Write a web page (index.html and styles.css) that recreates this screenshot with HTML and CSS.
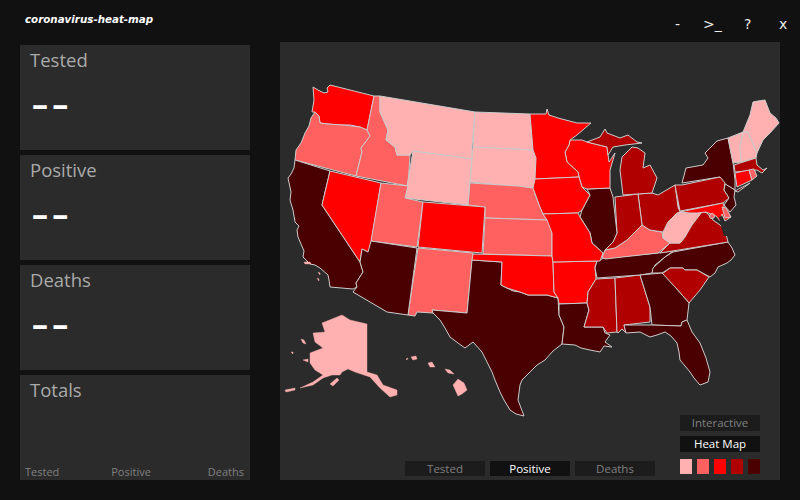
FILE: index.html
```html
<!DOCTYPE html>
<html>
<head lang="en">
    <meta charset="UTF-8">
    <title>coronavirus-heat-map</title>
    <link rel="stylesheet" href="styles.css">
</head>
<body>
<div class="app">
    <div class="titlebar">
        <div class="title">coronavirus-heat-map</div>
        <div class="win-btns">
            <span class="win-min">-</span>
            <span class="win-term">&gt;_</span>
            <span class="win-help">?</span>
            <span class="win-close">x</span>
        </div>
    </div>
    <div class="main">
        <div class="side">
            <div class="card">
                <div class="card-title">Tested</div>
                <div class="card-value">– –</div>
            </div>
            <div class="card">
                <div class="card-title">Positive</div>
                <div class="card-value">– –</div>
            </div>
            <div class="card">
                <div class="card-title">Deaths</div>
                <div class="card-value">– –</div>
            </div>
            <div class="card card-totals">
                <div class="card-title">Totals</div>
                <div class="totals-row">
                    <span>Tested</span>
                    <span class="totals-mid">Positive</span>
                    <span>Deaths</span>
                </div>
            </div>
        </div>
        <div class="map-panel">
            <svg class="map" viewBox="280 42 500 438">
                <polygon class="l3" points="313,87 318,90 324,93 328,92 327,88 330,85 374,96 367,130 360,127 350,125 340,125 328,124 320,123 319,116 315,112 312,112 314,100"/>
                <polygon class="l2" points="315,112 319,116 320,123 328,124 343,125 360,127 367,130 370,136 361,148 362,152 356,176 295,160 296,150 301,143 305,133 309,126 311,118"/>
                <polygon class="l5" points="295,160 330,171 322,205 360,262 363,272 356,283 357,287 353,289 330,287 329,280 328,275 320,268 315,265 310,264 303,257 304,251 298,237 297,230 299,226 295,222 293,210 290,200 291,192 288,178 291,174 294,168"/>
                <polygon class="l3" points="330,171 381,183 370,250 368,252 362,249 360,262 322,205"/>
                <polygon class="l2" points="374,96 380,96 380,112 388,130 386,140 395,147 397,155 410,155 408,186 356,176 362,152 361,148 370,136 367,130"/>
                <polygon class="l1" points="380,96 475,112 472,147 472,159 413,151 410,155 397,155 395,147 386,140 388,130 380,112"/>
                <polygon class="l1" points="413,151 472,159 468,205 405,198"/>
                <polygon class="l1" points="475,112 530,114 533,150 473,147"/>
                <polygon class="l1" points="473,147 533,150 536,158 536,180 533,188 520,187 470,182 472,159"/>
                <polygon class="l2" points="470,183 518,186 533,188 536,197 540,207 543,214 547,220 485,218 485,207 468,205"/>
                <polygon class="l2" points="381,183 408,186 405,198 423,202 417,247 371,241"/>
                <polygon class="l3" points="423,202 485,207 482,253 418,247"/>
                <polygon class="l2" points="485,218 547,220 552,226 552,233 552,256 483,254"/>
                <polygon class="l2" points="418,248 473,253 467,313 432,310 433,313 417,312 415,316 408,315"/>
                <polygon class="l5" points="371,241 417,248 408,315 387,312 353,292 357,287 356,283 363,272 360,262 362,249 368,252"/>
                <polygon class="l5" points="472,260 502,262 501,285 507,288 513,291 520,292 528,295 537,295 547,295 558,298 559,315 564,327 562,344 553,351 545,360 537,365 530,372 522,380 520,385 518,400 524,416 516,414 510,410 504,400 500,392 495,380 492,372 487,362 482,352 473,342 465,348 458,343 450,337 445,328 440,320 433,313 432,310 467,313"/>
                <polygon class="l3" points="473,254 552,256 553,262 554,292 558,298 547,295 537,295 528,295 520,292 507,288 501,285 502,262 472,260"/>
                <polygon class="l3" points="553,262 597,261 595,267 596,279 588,292 587,303 559,304 558,298 554,292"/>
                <polygon class="l5" points="559,304 587,303 589,310 584,327 603,327 605,333 610,335 605,342 612,347 604,346 600,352 590,350 581,348 575,345 562,344 564,327 559,315"/>
                <polygon class="l4" points="596,279 615,278 617,332 607,333 603,327 584,327 589,310 587,303 588,292"/>
                <polygon class="l4" points="615,278 640,275 650,307 650,322 624,325 626,333 622,329 618,333 617,332"/>
                <polygon class="l5" points="604,258 658,253 673,251 665,257 655,265 652,273 640,275 597,278 595,268 597,261"/>
                <polygon class="l5" points="673,252 728,242 732,248 735,255 731,260 727,263 718,267 715,273 710,277 697,270 685,270 683,268 670,268 662,273 652,273 653,268 665,257"/>
                <polygon class="l4" points="662,274 670,268 683,268 685,270 697,270 709,277 700,290 689,303 675,287"/>
                <polygon class="l5" points="640,275 662,273 675,287 689,303 687,320 682,322 681,326 652,325 650,307"/>
                <polygon class="l5" points="624,325 652,325 681,326 682,322 687,320 692,332 700,343 706,358 710,372 708,382 700,385 694,378 690,372 680,360 679,352 677,343 671,336 665,332 657,335 650,337 640,332 626,333"/>
                <polygon class="l2" points="602,257 605,250 615,248 627,240 642,225 650,230 662,232 663,238 670,243 658,253 605,259"/>
                <polygon class="l4" points="670,243 680,243 685,237 690,225 700,210 707,213 713,220 720,225 725,230 728,242 660,253"/>
                <polygon class="l1" points="663,232 668,222 677,213 677,200 680,212 690,213 697,213 700,210 702,212 692,225 685,237 680,243 670,243 663,238"/>
                <polygon class="l4" points="638,194 652,193 658,195 675,185 678,207 680,212 677,213 668,222 663,232 650,230 642,225"/>
                <polygon class="l4" points="615,197 638,194 642,225 627,240 615,248 605,250 613,242 617,233"/>
                <polygon class="l5" points="587,189 610,188 613,197 617,233 613,242 605,250 602,257 603,253 592,243 590,233 580,217 582,210 590,195"/>
                <polygon class="l3" points="570,140 582,140 587,142 607,147 609,162 615,153 610,170 610,188 587,189 582,187 579,177 578,172 567,162 565,152 569,145"/>
                <polygon class="l3" points="530,114 546,114 547,109 549,115 558,118 577,123 591,123 577,135 570,140 569,145 565,152 567,162 578,172 579,177 535,179 536,158 533,150"/>
                <polygon class="l3" points="535,179 579,177 582,187 590,195 582,210 578,213 543,214 540,207 533,188"/>
                <polygon class="l3" points="543,214 578,213 580,217 590,233 592,243 603,253 600,261 597,261 553,262 552,256 552,233 547,220"/>
                <polygon class="l4" points="587,142 600,137 605,129 607,133 620,138 628,135 637,142 642,143 625,145 613,147 608,155 607,147"/>
                <polygon class="l4" points="632,147 638,148 645,153 643,168 650,165 657,178 652,193 623,195 620,170 622,157"/>
                <polygon class="l5" points="682,183 686,168 703,165 708,158 705,153 717,141 728,138 733,162 735,180 735,190 725,184 720,177"/>
                <polygon class="l5" points="735,191 750,183 738,192"/>
                <polygon class="l4" points="675,185 682,185 720,177 725,183 724,190 729,198 723,203 680,211"/>
                <polygon class="l5" points="725,184 735,190 734,197 736,205 730,212 724,205 729,198 724,190"/>
                <polygon class="l3" points="680,212 723,203 726,214 731,217 725,221 722,214 721,222 716,216 706,212 697,213 690,213"/>
                <polygon class="l2" points="722,207 726,208 731,217 725,218"/>
                <polygon class="bay" points="719,217 722,216 724,226 728,236 724,236 721,226"/>
                <circle class="l2" cx="712" cy="216" r="2.5"/>
                <polygon class="l1" points="728,138 743,132 740,147 741,162 733,163"/>
                <polygon class="l1" points="743,132 748,132 757,153 756,158 741,162 740,147"/>
                <polygon class="l1" points="743,132 750,115 753,102 758,101 765,100 770,113 776,118 779,123 770,133 763,140 757,153 748,132"/>
                <polygon class="l4" points="734,165 756,158 757,165 763,170 767,168 762,173 757,170 735,172"/>
                <polygon class="l3" points="735,173 749,170 752,180 737,187"/>
                <polygon class="l2" points="749,170 754,169 757,176 752,180"/>
                <polygon class="a1" points="322,323 342,315 350,320 367,324 367,372 377,375 383,385 397,390 397,395 390,397 380,388 370,377 355,372 348,369 342,372 340,375 332,375 323,378 313,385 300,388 313,382 323,375 315,370 310,363 310,353 323,348 315,342 313,333 325,332"/>
                <polygon class="a1" points="330,384 337,378 339,380 333,386"/>
                <polygon class="a1" points="285,390 295,388 295,390 286,392"/>
                <polygon class="a1" points="301,339 304,340 306,344 303,343"/>
                <polygon class="a1" points="303,360 308,359 308,362"/>
                <polygon class="a1" points="291,352 293,352 293,354"/>
                <polygon class="a1" points="453,385 458,379 464,383 467,390 462,394 458,396"/>
                <polygon class="a1" points="445,369 450,370 454,374 448,373"/>
                <polygon class="a1" points="428,363 432,362 435,367 430,367"/>
                <polygon class="a1" points="411,357 416,356 417,359 413,360"/>
                <polygon class="a1" points="406,359 408,358 407,360"/>
                <polygon class="a1" points="304,262 310,262 311,264 305,264"/>
                <polygon class="a1" points="318,272 320,273 320,275"/>
                <polygon class="a1" points="317,278 319,279 319,281"/>
            </svg>
            <div class="metric-btns">
                <div class="btn">Tested</div>
                <div class="btn active">Positive</div>
                <div class="btn">Deaths</div>
            </div>
            <div class="mode-box">
                <div class="btn mode">Interactive</div>
                <div class="btn mode active">Heat Map</div>
                <div class="legend">
                    <span class="sw sw1"></span>
                    <span class="sw sw2"></span>
                    <span class="sw sw3"></span>
                    <span class="sw sw4"></span>
                    <span class="sw sw5"></span>
                </div>
            </div>
        </div>
    </div>
</div>
</body>
</html>
```
FILE: styles.css
```css
* {
    margin: 0;
    padding: 0;
    box-sizing: border-box;
}
:root {
    --l1: #ffb0b0;
    --l2: #ff6060;
    --l3: #ff0000;
    --l4: #b00000;
    --l5: #4a0000;
}
body {
    background: #111;
    font-family: "Open Sans", "Noto Sans", sans-serif;
    overflow: hidden;
}
.app {
    width: 800px;
    height: 500px;
}
.titlebar {
    height: 42px;
    display: flex;
    justify-content: space-between;
    padding-left: 25px;
}
.title {
    font-family: "DejaVu Sans", sans-serif;
    font-size: 10.3px;
    font-weight: 700;
    font-style: italic;
    color: #fff;
    padding-top: 13px;
}
.win-btns {
    width: 130px;
    font-size: 14px;
    color: #eee;
    font-family: "DejaVu Sans", sans-serif;
    display: flex;
    padding-top: 16px;
    line-height: 17px;
}
.win-min { margin-left: 5px; width: 28px; }
.win-term { width: 41px; }
.win-help { width: 35px; }
.main {
    display: flex;
    padding-left: 20px;
    gap: 30px;
}
.side {
    width: 230px;
    padding-top: 3px;
    display: flex;
    flex-direction: column;
    gap: 5px;
}
.card {
    height: 105px;
    background: #2b2b2b;
    padding-left: 10px;
}
.card-title {
    font-size: 18.5px;
    color: #aaa;
    line-height: 30px;
}
.card-value {
    font-size: 32px;
    font-weight: 700;
    color: #fff;
    padding-left: 2px;
    word-spacing: -4px;
    line-height: 32px;
    margin-top: 13px;
}
.card-totals {
    position: relative;
}
.totals-row {
    position: absolute;
    left: 5px;
    right: 6px;
    bottom: 0;
    display: flex;
    justify-content: space-between;
    font-size: 11px;
    color: #808080;
    line-height: 17px;
}
.totals-mid {
    margin-right: 5px;
}
.map-panel {
    width: 500px;
    height: 438px;
    background: #2b2b2b;
    position: relative;
}
.map {
    display: block;
    width: 500px;
    height: 438px;
}
.map polygon, .map circle {
    stroke: #ccc;
    stroke-width: 1;
    stroke-linejoin: round;
}
.l1 { fill: var(--l1); }
.l2 { fill: var(--l2); }
.l3 { fill: var(--l3); }
.l4 { fill: var(--l4); }
.l5 { fill: var(--l5); }
.map .a1 {
    fill: var(--l1);
    stroke: var(--l1);
    stroke-width: 0.4;
}
.map .bay {
    fill: #2b2b2b;
    stroke: none;
}
.metric-btns {
    position: absolute;
    left: 125px;
    bottom: 4px;
    display: flex;
    gap: 5px;
}
.btn {
    width: 80px;
    height: 15px;
    background: #1c1c1c;
    color: #808080;
    font-size: 11.5px;
    padding-top: 1px;
    line-height: 14px;
    text-align: center;
}
.btn.active {
    background: #111;
    color: #fff;
}
.mode-box {
    position: absolute;
    left: 400px;
    top: 373px;
    width: 80px;
    display: flex;
    flex-direction: column;
    gap: 5px;
}
.mode {
    height: 16px;
    padding-top: 0;
    line-height: 16px;
}
.legend {
    display: flex;
    justify-content: space-between;
    margin-top: 2px;
}
.sw {
    width: 12px;
    height: 15px;
}
.sw1 { background: var(--l1); }
.sw2 { background: var(--l2); }
.sw3 { background: var(--l3); }
.sw4 { background: var(--l4); }
.sw5 { background: var(--l5); }
```
